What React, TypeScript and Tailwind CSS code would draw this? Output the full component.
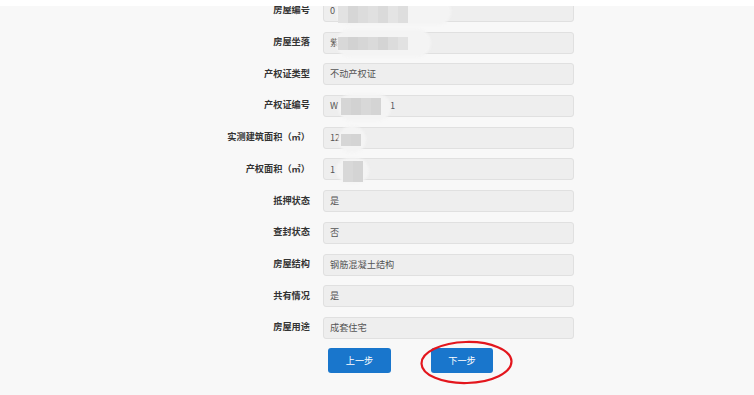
import React from 'react';

type Row = {
  label: string;
  value: string;
  blob?: { halo: string; mosaic: string; cells: string[] };
};

const rows: Row[] = [
  {
    label: '房屋编号',
    value: '0',
    blob: {
      halo: 'left-[12px] top-[-2px] w-[115px] h-[26px]',
      mosaic: 'left-[14px] top-[1px] h-[21px]',
      cells: ['bg-[#e2e2e2]', 'bg-[#d6d6d6]', 'bg-[#dcdcdc]', 'bg-[#e0e0e0]', 'bg-[#dadada]', 'bg-[#e4e4e4]', 'bg-[#dedede]'],
    },
  },
  {
    label: '房屋坐落',
    value: '紫',
    blob: {
      halo: 'left-[12px] top-[-4px] w-[95px] h-[28px]',
      mosaic: 'left-[14px] top-[4px] h-[13px]',
      cells: ['bg-[#d8d8d8]', 'bg-[#d2d2d2]', 'bg-[#d6d6d6]', 'bg-[#dadada]', 'bg-[#d4d4d4]', 'bg-[#dcdcdc]', 'bg-[#e2e2e2]'],
    },
  },
  { label: '产权证类型', value: '不动产权证' },
  {
    label: '产权证编号',
    value: 'W',
    blob: {
      halo: 'left-[14px] top-[-2px] w-[53px] h-[27px]',
      mosaic: 'left-[17px] top-[2px] h-[17px]',
      cells: ['bg-[#d6d6d6]', 'bg-[#d2d2d2]', 'bg-[#d8d8d8]', 'bg-[#d4d4d4]'],
    },
  },
  {
    label: '实测建筑面积（㎡）',
    value: '12',
    blob: {
      halo: 'left-[14px] top-[-2px] w-[28px] h-[27px]',
      mosaic: 'left-[17px] top-[6px] h-[12px]',
      cells: ['bg-[#d6d6d6]', 'bg-[#d4d4d4]'],
    },
  },
  {
    label: '产权面积（㎡）',
    value: '1',
    blob: {
      halo: 'left-[12px] top-[-1px] w-[33px] h-[25px]',
      mosaic: 'left-[19px] top-[2px] h-[21px]',
      cells: ['bg-[#d8d8d8]', 'bg-[#d4d4d4]'],
    },
  },
  { label: '抵押状态', value: '是' },
  { label: '查封状态', value: '否' },
  { label: '房屋结构', value: '钢筋混凝土结构' },
  { label: '共有情况', value: '是' },
  { label: '房屋用途', value: '成套住宅' },
];

function Field({ row }: { row: Row }) {
  return (
    <div className="flex items-center">
      <div className="w-[310px] text-right text-[9.2px] font-bold text-[#333] leading-none -mt-[2px]">
        {row.label}
      </div>
      <div className="relative ml-[13px] w-[251px] h-[22px] rounded-[3px] border border-[#e0e0e0] bg-[#eeeeee] flex items-center pl-[6px] text-[9.2px] text-[#555]">
        <span>{row.value}</span>
        {row.label === '产权证编号' && <span className="absolute left-[66px]">1</span>}
        {row.blob && (
          <>
            <div className={`absolute rounded-full bg-[#f4f4f4] blur-[1px] ${row.blob.halo}`} />
            <div className={`absolute flex ${row.blob.mosaic}`}>
              {row.blob.cells.map((c, i) => (
                <div key={i} className={`w-[10px] h-full ${c}`} />
              ))}
            </div>
          </>
        )}
      </div>
    </div>
  );
}

export default function App() {
  return (
    <div className="relative h-[395px] w-full overflow-hidden bg-[#f8f8f8]" style={{ fontFamily: '"Microsoft YaHei", "Noto Sans CJK SC", sans-serif' }}>
      {/* top strip */}
      <div className="absolute top-0 left-0 right-0 h-[6px] bg-white z-10" />

      <div className="flex flex-col gap-[9.7px]">
        {rows.map((r) => (
          <Field key={r.label} row={r} />
        ))}
      </div>

      <div className="mt-[9.4px] ml-[328px] flex gap-[40px]">
        <button className="w-[63px] h-[25px] rounded-[3px] bg-[#1976cc] text-white text-[9.2px]">上一步</button>
        <button className="w-[62px] h-[25px] rounded-[3px] bg-[#1976cc] text-white text-[9.2px]">下一步</button>
      </div>

      {/* hand-drawn highlight */}
      <svg className="absolute left-[419px] top-[340px]" width="96" height="46" viewBox="0 0 96 46">
        <ellipse cx="47.5" cy="22.5" rx="45" ry="20.5" fill="none" stroke="#e3161d" strokeWidth="2.2" transform="rotate(-1.5 47.5 22.5)" />
      </svg>
    </div>
  );
}
